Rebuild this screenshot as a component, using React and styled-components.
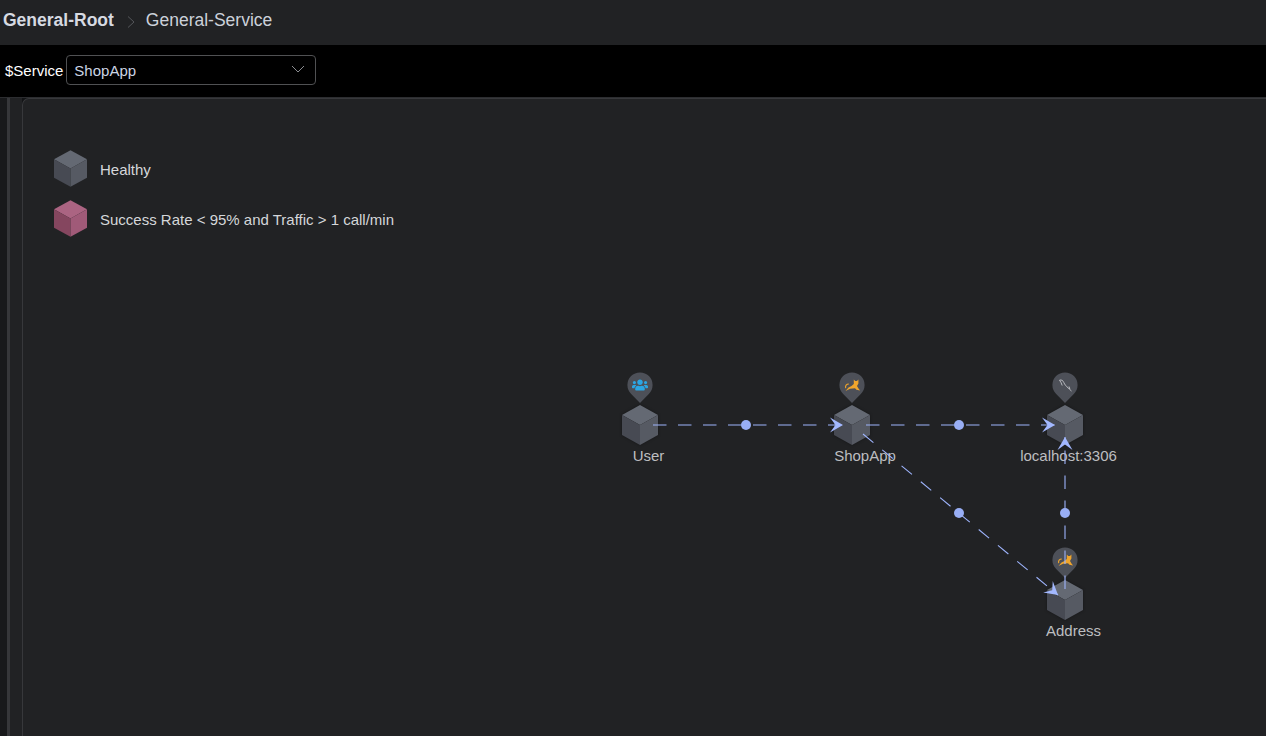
import React from "react";
import styled, { createGlobalStyle } from "styled-components";
import { FaUsers } from "react-icons/fa";

const GlobalStyle = createGlobalStyle`
  html, body {
    margin: 0;
    padding: 0;
    height: 100%;
    overflow: hidden;
    background-color: #212224;
    font-family: "Liberation Sans", Arial, sans-serif;
  }
`;

const Page = styled.div`
  display: flex;
  flex-direction: column;
  width: 1266px;
  height: 736px;
  overflow: hidden;
`;

// breadcrumb
const Header = styled.div`
  display: flex;
  align-items: center;
  height: 45px;
  padding: 0 0 4px 3px;
  box-sizing: border-box;
  background-color: #212224;
  font-size: 17.5px;
  color: #ccd1da;
`;
const RootCrumb = styled.span`
  font-weight: bold;
  color: #d6dae2;
`;
const Separator = styled.svg`
  width: 8px;
  height: 12px;
  margin: 2px 11px 0 13px;
`;

// variable bar
const Toolbar = styled.div`
  display: flex;
  align-items: center;
  height: 52px;
  padding: 0 0 2px 5px;
  box-sizing: border-box;
  background-color: #000;
`;
const VarLabel = styled.span`
  font-size: 15px;
  color: #fff;
  margin-right: 3px;
`;
const Select = styled.div`
  display: flex;
  align-items: center;
  justify-content: space-between;
  width: 250px;
  height: 30px;
  padding: 0 10px 0 7px;
  box-sizing: border-box;
  border: 1px solid #505153;
  border-radius: 4px;
  font-size: 15px;
  color: #ccd5e4;
`;
const Chevron = styled.svg`
  width: 14px;
  height: 8px;
  margin-bottom: 2px;
`;

// main
const Body = styled.div`
  display: flex;
  flex: 1;
  min-height: 0;
  background-color: #131416;
  border-top: 1px solid #2c2d30;
`;
const Rail = styled.div`
  width: 7px;
  background-color: #18191b;
`;
const RailLine = styled.div`
  width: 3px;
  background-color: #36373a;
`;
const Gutter = styled.div`
  width: 12px;
  background-color: #212224;
`;
const Panel = styled.div`
  position: relative;
  flex: 1;
  padding: 52px 0 0 31px;
  background-color: #212224;
  border-top: 1px solid #37383b;
  border-left: 1px solid #37383b;
  border-top-left-radius: 7px;
`;

// legend
const Legend = styled.div`
  display: flex;
  flex-direction: column;
  gap: 13px;
`;
const LegendRow = styled.div`
  display: flex;
  align-items: center;
  gap: 13px;
  height: 37px;
  font-size: 15px;
  color: #d5d7da;
`;
const LegendCube = styled.svg`
  width: 33px;
  height: 37px;
  margin-top: -2px;
`;

// topology
const Canvas = styled.svg`
  position: absolute;
  left: 0;
  top: 0;
  width: 1243px;
  height: 638px;
`;
const NodeLabel = styled.text`
  font-size: 15px;
  fill: #bdbec0;
`;
const Edge = styled.line`
  stroke: #9db3fb;
  stroke-width: 1.1;
  stroke-dasharray: 13.500 11.500;
`;
const EdgeDot = styled.circle`
  fill: #98aef5;
`;
const Arrow = styled.path`
  fill: #a3b8ff;
`;
const PinShape = styled.path`
  fill: #4d5058;
`;
const CubeShadow = styled.g`
  filter: drop-shadow(0 0 1.5px rgba(0, 0, 0, 0.35));
`;

const healthy = { top: "#646973", left: "#474a53", right: "#565a63" };
const failing = { top: "#ab6482", left: "#85465f", right: "#a05a78" };

// hexagonal box centred on 0,0, 36 wide and 40 high
function CubeFaces({ colors }) {
  return (
    <>
      <path d="M0 -20 L18 -10 L0 0 L-18 -10 Z" fill={colors.top} />
      <path d="M-18 -10 L0 0 L0 20 L-18 10 Z" fill={colors.left} />
      <path d="M18 -10 L0 0 L0 20 L18 10 Z" fill={colors.right} />
    </>
  );
}

function TomcatIcon() {
  return (
    <g fill="#f0a52c">
      <path d="M1.800 -5.500 L3.200 -4 L5 -4 L6.400 -5.500 L6.400 -1.500 L5 1 L6.500 3.500 L8 5.500 L4.500 4.800 L3 3.200 L-2 3.800 L-6.500 6 L-3.500 2.500 L-.5 1 L1.800 -1 Z" />
      <path d="M-6.300 3.200 C-7 .5 -5.500 -1 -3.200 -1" fill="none" stroke="#f0a52c" strokeWidth="1.100" />
    </g>
  );
}

function MysqlIcon() {
  return (
    <path
      d="M-5.500 -4.800 C-3.500 -5.500 -2 -4.500 -1.200 -2.500 C-.4 -.5 1.500 1.500 3 2.800 C4.200 3.900 5.200 4.800 6.500 6 M-5.500 -4.800 L-4 -2.500 L-2.800 .5 M4 1.500 L4.800 4"
      fill="none"
      stroke="#d3d4d8"
      strokeWidth=".8"
    />
  );
}

function Node({ x, y, label, labelX, icon }) {
  return (
    <>
      <CubeShadow transform={`translate(${x} ${y})`}>
        <CubeFaces colors={healthy} />
      </CubeShadow>
      <g transform={`translate(${x} ${y - 40})`}>
        <PinShape d="M0 18 L-8.800 9 A12.600 12.600 0 1 1 8.800 9 Z" />
        {icon}
      </g>
      <NodeLabel x={labelX} y={y + 35.500} textAnchor="middle">
        {label}
      </NodeLabel>
    </>
  );
}

function Link({ x1, y1, x2, y2, dotX, dotY }) {
  const angle = (Math.atan2(y2 - y1, x2 - x1) * 180) / Math.PI;
  return (
    <>
      <Edge x1={x1} y1={y1} x2={x2} y2={y2} />
      <EdgeDot cx={dotX} cy={dotY} r="5" />
      <Arrow
        d="M0 0 L-13 -7.500 L-7.500 0 L-13 7.500 Z"
        transform={`translate(${x2} ${y2}) rotate(${angle})`}
      />
    </>
  );
}

export default function App() {
  // canvas coordinates start at the panel corner (23, 99)
  const ox = -23;
  const oy = -99;
  return (
    <>
      <GlobalStyle />
      <Page>
        <Header>
          <RootCrumb>General-Root</RootCrumb>
          <Separator viewBox="0 0 8 12">
            <path d="M1 .5 L7 6 L1 11.500" fill="none" stroke="#55575b" strokeWidth="1" />
          </Separator>
          <span>General-Service</span>
        </Header>
        <Toolbar>
          <VarLabel>$Service</VarLabel>
          <Select>
            ShopApp
            <Chevron viewBox="0 0 14 8">
              <path d="M1 1 L7 7 L13 1" fill="none" stroke="#8b8d91" strokeWidth="1" />
            </Chevron>
          </Select>
        </Toolbar>
        <Body>
          <Rail />
          <RailLine />
          <Gutter />
          <Panel>
            <Legend>
              <LegendRow>
                <LegendCube viewBox="-18 -20 36 40">
                  <CubeFaces colors={healthy} />
                </LegendCube>
                Healthy
              </LegendRow>
              <LegendRow>
                <LegendCube viewBox="-18 -20 36 40">
                  <CubeFaces colors={failing} />
                </LegendCube>
                {"Success Rate < 95% and Traffic > 1 call/min"}
              </LegendRow>
            </Legend>
            <Canvas viewBox="0 0 1243 638">
              <g transform={`translate(${ox} ${oy})`}>
                <Node
                  x={640}
                  y={425}
                  label="User"
                  labelX={648.500}
                  icon={<FaUsers x={-8} y={-8} size={16} color="#2ba6e4" />}
                />
                <Node x={852} y={425} label="ShopApp" labelX={865} icon={<TomcatIcon />} />
                <Node x={1065} y={425} label="localhost:3306" labelX={1068.500} icon={<MysqlIcon />} />
                <Node x={1065} y={600} label="Address" labelX={1073.500} icon={<TomcatIcon />} />
                <Link x1={653} y1={425} x2={843} y2={425} dotX={746} dotY={425} />
                <Link x1={866} y1={425} x2={1055} y2={425} dotX={959} dotY={425} />
                <Link x1={863} y1={434} x2={1058} y2={595} dotX={959} dotY={513} />
                <Link x1={1065} y1={589} x2={1065} y2={437} dotX={1065} dotY={513} />
              </g>
            </Canvas>
          </Panel>
        </Body>
      </Page>
    </>
  );
}
